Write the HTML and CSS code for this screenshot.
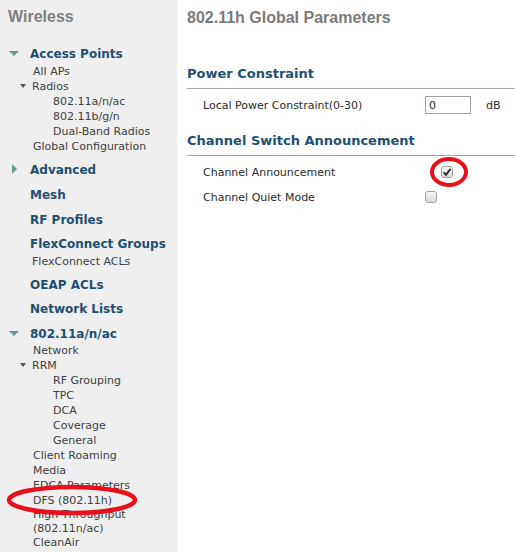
FILE: index.html
```html
<!DOCTYPE html>
<html lang="en">
<head>
    <meta charset="UTF-8">
    <meta name="viewport" content="width=device-width, initial-scale=1.0">
    <title>802.11h Global Parameters</title>
    <link rel="stylesheet" href="styles.css">
</head>
<body>
    <aside class="sidebar">
        <h2 class="side-title">Wireless</h2>

        <div class="nav-head open">Access Points</div>
        <ul class="nav-sub">
            <li>All APs</li>
            <li class="tree">Radios</li>
            <li class="deep">802.11a/n/ac</li>
            <li class="deep">802.11b/g/n</li>
            <li class="deep">Dual-Band Radios</li>
            <li>Global Configuration</li>
        </ul>

        <div class="nav-head closed">Advanced</div>
        <div class="nav-head">Mesh</div>
        <div class="nav-head">RF Profiles</div>
        <div class="nav-head">FlexConnect Groups</div>
        <ul class="nav-sub">
            <li class="flex-acl">FlexConnect ACLs</li>
        </ul>
        <div class="nav-head">OEAP ACLs</div>
        <div class="nav-head">Network Lists</div>

        <div class="nav-head open">802.11a/n/ac</div>
        <ul class="nav-sub">
            <li>Network</li>
            <li class="tree">RRM</li>
            <li class="deep">RF Grouping</li>
            <li class="deep">TPC</li>
            <li class="deep">DCA</li>
            <li class="deep">Coverage</li>
            <li class="deep">General</li>
            <li>Client Roaming</li>
            <li>Media</li>
            <li>EDCA Parameters</li>
            <li>DFS (802.11h)</li>
            <li class="wrap">High Throughput<br>(802.11n/ac)</li>
            <li>CleanAir</li>
        </ul>
    </aside>

    <main class="content">
        <h1 class="page-title">802.11h Global Parameters</h1>

        <h3 class="section">Power Constraint</h3>
        <div class="row first">
            <span class="row-label">Local Power Constraint(0-30)</span>
            <input class="text-input" type="text" value="0">
            <span class="unit">dB</span>
        </div>

        <h3 class="section second">Channel Switch Announcement</h3>
        <div class="row first">
            <span class="row-label">Channel Announcement</span>
            <span class="checkbox checked">
                <svg width="10" height="10" viewBox="0 0 10 10"><path d="M1.6 5.4 L4 7.8 L8.6 1.8" fill="none" stroke="#333" stroke-width="2"/></svg>
            </span>
        </div>
        <div class="row">
            <span class="row-label">Channel Quiet Mode</span>
            <span class="checkbox"></span>
        </div>
    </main>

    <svg class="mark mark-check" width="42" height="34" viewBox="0 0 42 34"><ellipse cx="21" cy="17" rx="17" ry="13" fill="none" stroke="#e8111b" stroke-width="4"/></svg>
    <svg class="mark mark-dfs" width="136" height="36" viewBox="0 0 136 36"><ellipse cx="68" cy="18" rx="63" ry="13" fill="none" stroke="#e8111b" stroke-width="4.5"/></svg>
</body>
</html>
```

FILE: styles.css
```css
* {
    margin: 0;
    padding: 0;
    box-sizing: border-box;
}

body {
    display: flex;
    height: 552px;
    overflow: hidden;
    background-color: white;
    font-family: "DejaVu Sans", Verdana, sans-serif;
    font-size: 11px;
    color: #333;
}

/* left menu */
.sidebar {
    width: 177px;
    flex-shrink: 0;
    background-color: #efefef;
    padding-top: 8px;
}

.side-title {
    font-family: "Liberation Sans", Arial, sans-serif;
    font-size: 16px;
    line-height: 18px;
    color: #808080;
    margin-left: 8px;
    margin-bottom: 16px;
}

.nav-head {
    font-size: 12px;
    font-weight: bold;
    line-height: 24.5px;
    color: #1e4f70;
    padding-left: 30px;
}

.nav-head.open {
    padding-left: 9px;
}

.nav-head.open::before {
    content: "";
    display: inline-block;
    vertical-align: middle;
    border-left: 5px solid transparent;
    border-right: 5px solid transparent;
    border-top: 5px solid #5f9c9c;
    margin-right: 11px;
    margin-top: -2px;
}

.nav-head.closed {
    padding-left: 12px;
    margin-top: 1px;
    margin-bottom: 1px;
}

.nav-head.closed::before {
    content: "";
    display: inline-block;
    vertical-align: middle;
    border-top: 5px solid transparent;
    border-bottom: 5px solid transparent;
    border-left: 5px solid #5f9c9c;
    margin-right: 13px;
    margin-top: -2px;
}

.nav-sub {
    list-style: none;
    margin: -3px 0 4px;
}

.nav-sub li {
    line-height: 15px;
    padding-left: 33px;
    color: #404040;
}

.nav-sub li.tree {
    padding-left: 20px;
}

.nav-sub li.tree::before {
    content: "";
    display: inline-block;
    vertical-align: middle;
    border-left: 3.5px solid transparent;
    border-right: 3.5px solid transparent;
    border-top: 4px solid #555;
    margin-right: 6px;
    margin-top: -2px;
}

.nav-sub li.deep {
    padding-left: 53px;
}

.nav-sub li.flex-acl {
    padding-left: 32px;
}

.nav-sub li.wrap {
    line-height: 13.5px;
}

/* right content */
.content {
    flex: 1;
    padding: 8px 0 0 10px;
}

.page-title {
    font-family: "Liberation Sans", Arial, sans-serif;
    font-size: 16px;
    line-height: 20px;
    color: #7a7a7a;
}

.section {
    font-size: 13px;
    font-weight: bold;
    line-height: 16px;
    color: #1e5070;
    padding-bottom: 6px;
    border-bottom: 1px solid #a0a6b5;
    margin-top: 38px;
}

.section.second {
    margin-top: 18px;
}

.row {
    display: flex;
    align-items: center;
    height: 20px;
    padding-left: 16px;
    margin-top: 5px;
    color: #2a2a2a;
}

.row.first {
    margin-top: 6px;
}

.row-label {
    width: 222px;
}

.text-input {
    width: 46px;
    height: 18px;
    border: 1px solid #a0a0a0;
    padding-left: 3px;
    font-family: "DejaVu Sans", Verdana, sans-serif;
    font-size: 11px;
    color: #222;
    background: white;
}

.unit {
    margin-left: 15px;
}

.checkbox {
    display: inline-flex;
    align-items: center;
    justify-content: center;
    width: 12px;
    height: 12px;
    border: 1px solid #a2a2a2;
    border-radius: 3px;
    background: linear-gradient(#f6f6f6, #d9d9d9);
}

.checkbox.checked {
    margin-left: 16px;
}

/* red annotation rings */
.mark {
    position: absolute;
}

.mark-check {
    left: 428px;
    top: 155px;
}

.mark-dfs {
    left: 4px;
    top: 482px;
}
```
